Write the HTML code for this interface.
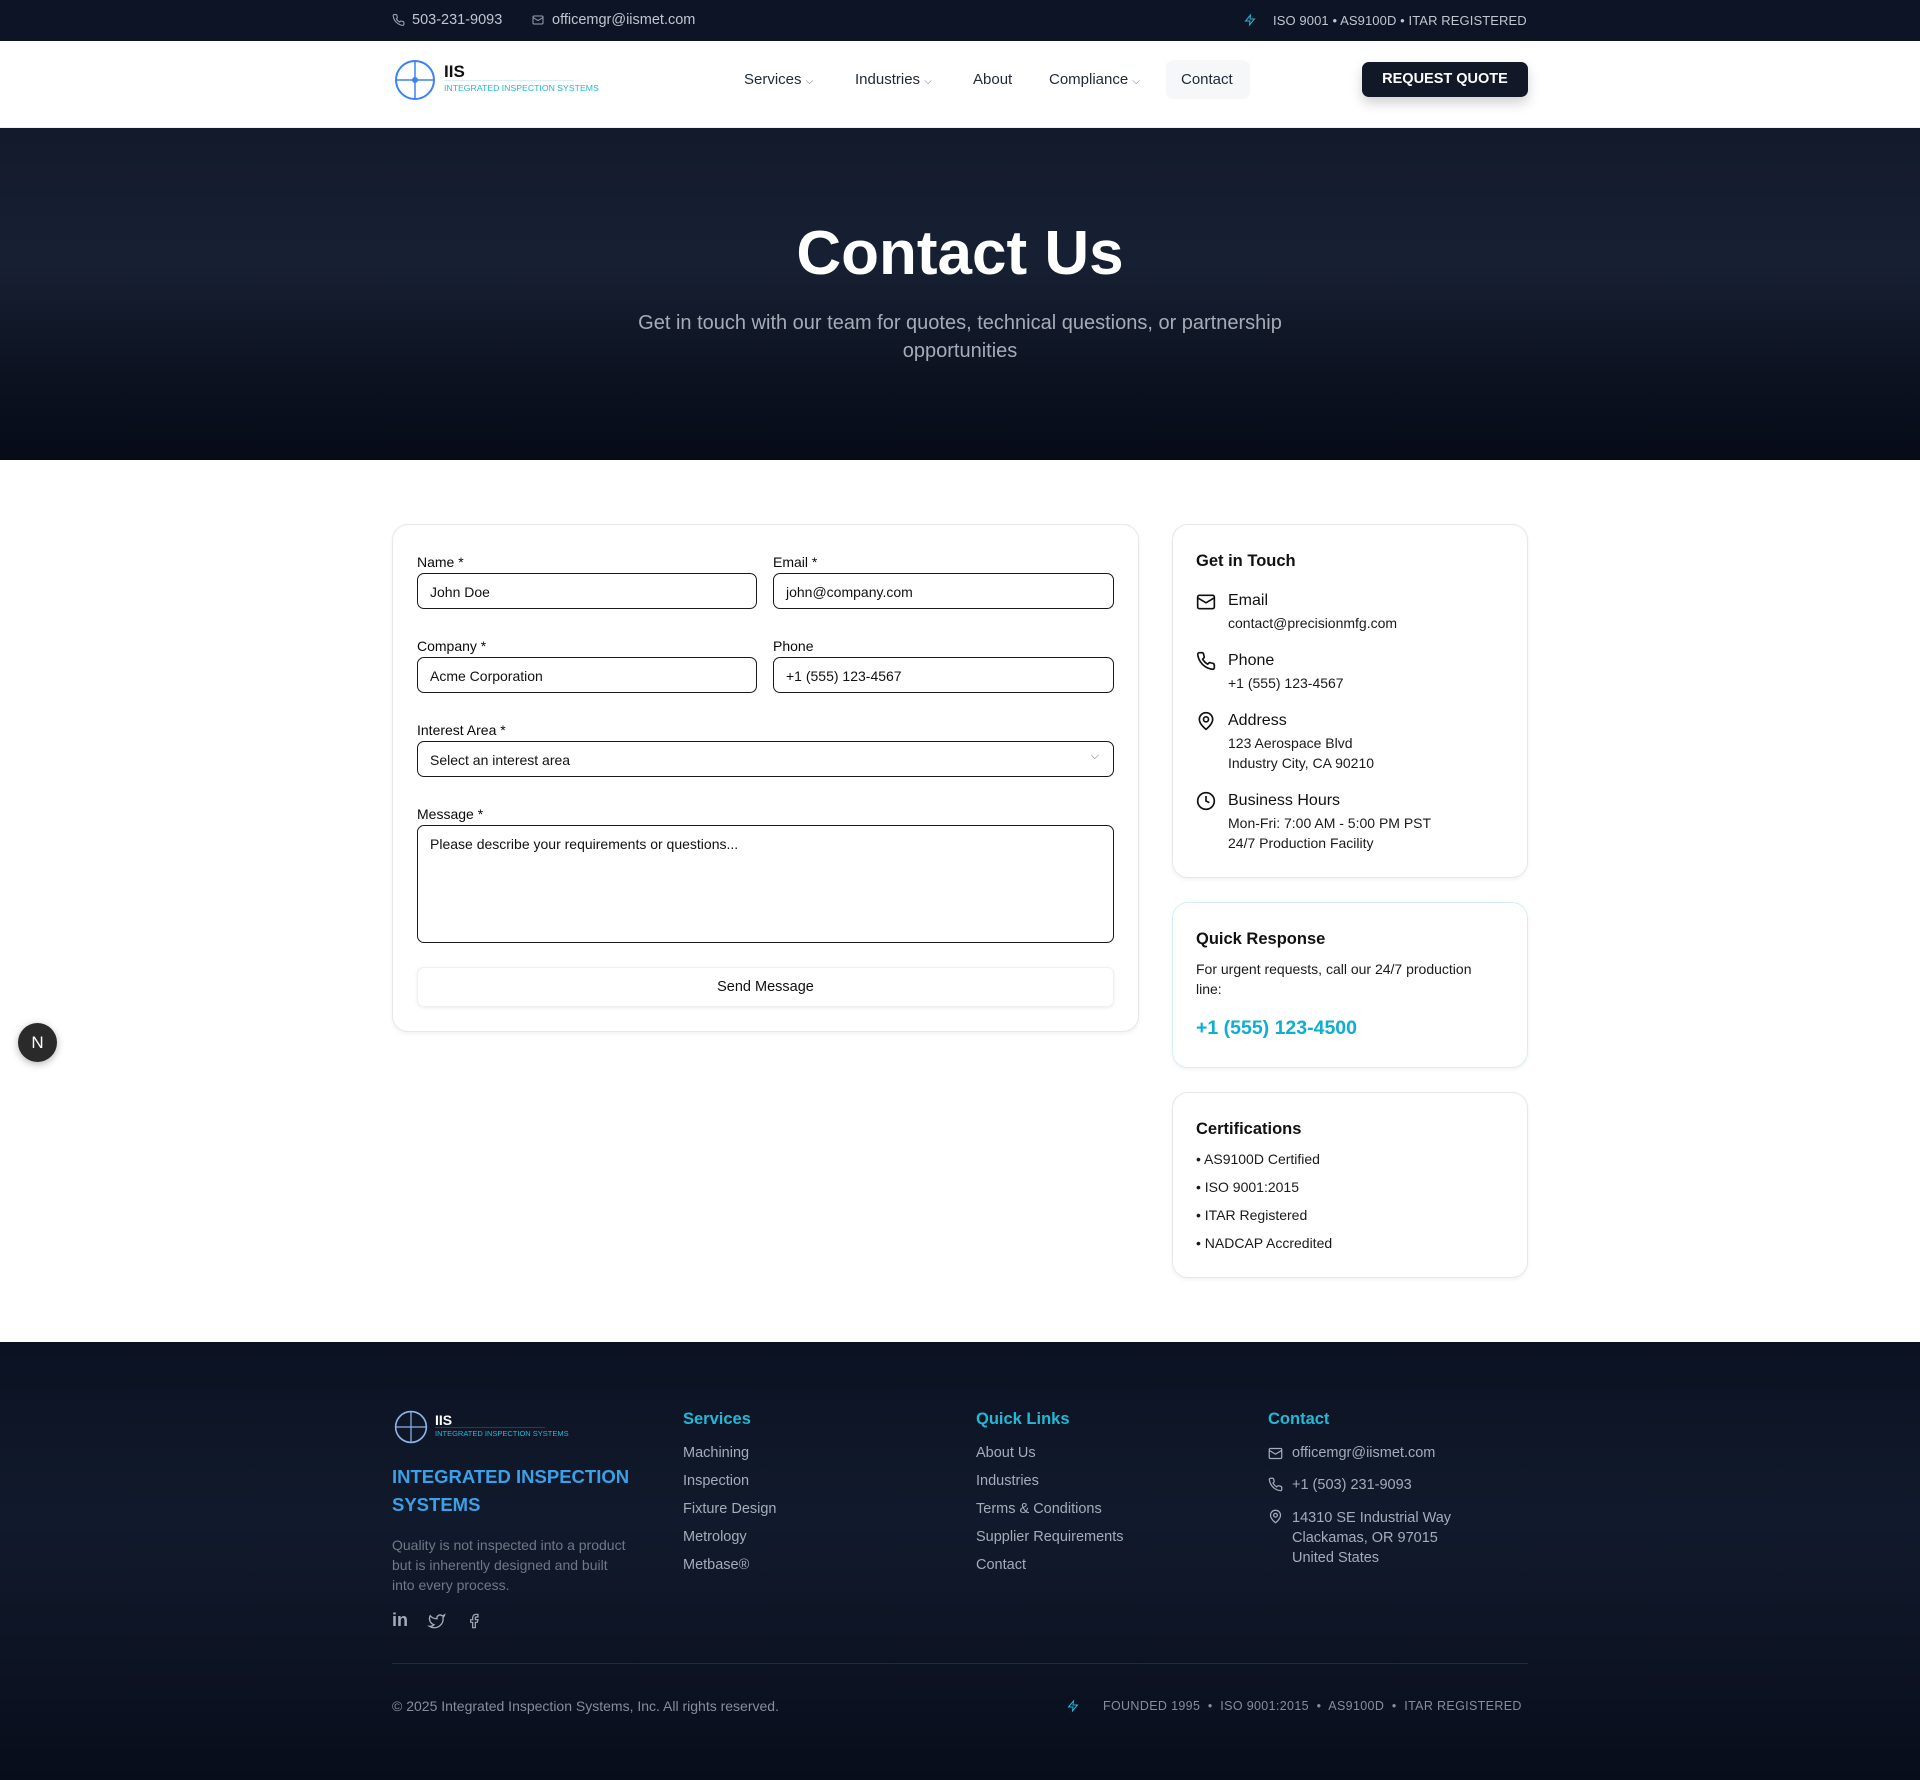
<!DOCTYPE html>
<html><head><meta charset="utf-8"><style>
*{box-sizing:border-box;margin:0;padding:0}
body{width:1920px;height:1780px;position:relative;font-family:"Liberation Sans",Arial,sans-serif;background:#fff;color:#0a0a0a;overflow:hidden}
.a{position:absolute;white-space:nowrap}
.top{left:0;top:0;width:1920px;height:41px;background:#0d1426}
.nav{left:0;top:41px;width:1920px;height:87px;background:#fff;border-bottom:1px solid #eceef1}
.nl{font-size:15px;color:#1f2937;top:71px}
.hero{left:0;top:128px;width:1920px;height:332px;background:linear-gradient(180deg,#121a2b 0%,#172033 40%,#0c1220 75%,#070b18 100%)}
.card{border:1.5px solid #e5e7eb;border-radius:16px;background:#fff;box-shadow:0 2px 4px rgba(0,0,0,.05)}
.lbl{font-size:14px;color:#0a0a0a}
.inp{border:1.5px solid #1a1a1a;border-radius:7px;height:36px;font-size:14px;padding:10px 12px;color:#111}
.ct{font-size:16.5px;font-weight:bold;color:#111}
.cs{font-size:16px;color:#111}
.cx{font-size:14px;color:#1a1a1a}
.foot{left:0;top:1342px;width:1920px;height:438px;background:linear-gradient(180deg,#0b1222 0%,#111a2c 40%,#0d1424 70%,#080d1b 100%)}
.fh{font-size:16.5px;color:#22b8d6;font-weight:bold}
.fl{font-size:14.5px;color:#a4acb9}
</style></head><body>
<div class="a top"></div>
<svg class="a" style="left:392px;top:13px" width="13" height="14" viewBox="0 0 24 24" fill="none" stroke="#9aa3b2" stroke-width="2"><path d="M22 16.9v3a2 2 0 0 1-2.2 2 19.8 19.8 0 0 1-8.6-3.1 19.5 19.5 0 0 1-6-6A19.8 19.8 0 0 1 2.1 4.2 2 2 0 0 1 4.1 2h3a2 2 0 0 1 2 1.7c.1.9.4 1.8.7 2.7a2 2 0 0 1-.5 2.1L8 9.8a16 16 0 0 0 6 6l1.3-1.3a2 2 0 0 1 2.1-.4c.9.3 1.8.6 2.7.7a2 2 0 0 1 1.7 2z"/></svg>
<span class="a" style="left:412px;top:12px;color:#c0c6d0;font-size:14.5px">503-231-9093</span>
<svg class="a" style="left:532px;top:14px" width="12" height="12" viewBox="0 0 24 24" fill="none" stroke="#9aa3b2" stroke-width="2"><rect x="2" y="4" width="20" height="16" rx="2"/><path d="m22 7-10 6L2 7"/></svg>
<span class="a" style="left:552px;top:12px;color:#c0c6d0;font-size:14.5px">officemgr@iismet.com</span>
<svg class="a" style="left:1244px;top:13px" width="12" height="14" viewBox="0 0 24 24" fill="none" stroke="#22b8d6" stroke-width="2"><path d="M13 2 3 14h9l-1 8 10-12h-9z"/></svg>
<span class="a" style="left:1273px;top:13px;color:#c0c6d0;font-size:13px;letter-spacing:.1px">ISO 9001 • AS9100D • ITAR REGISTERED</span>

<div class="a nav"></div>
<svg class="a" style="left:394px;top:59px" width="42" height="42" viewBox="0 0 42 42" fill="none" stroke="#3b82f6" stroke-width="2"><circle cx="21" cy="21" r="19"/><path d="M21 2v38M2 21h38" stroke-width="1.5"/><circle cx="21" cy="21" r="2" fill="#3b82f6"/></svg>
<span class="a" style="left:444px;top:62px;font-size:17px;font-weight:bold;color:#111">IIS</span>
<div class="a" style="left:444px;top:80px;width:130px;height:1px;background:#d8eef8"></div>
<span class="a" style="left:444px;top:83px;font-size:8.7px;color:#22b8d6">INTEGRATED INSPECTION SYSTEMS</span>
<span class="a nl" style="left:744px">Services <span style="font-size:10px;color:#777">⌵</span></span>
<span class="a nl" style="left:855px">Industries <span style="font-size:10px;color:#777">⌵</span></span>
<span class="a nl" style="left:973px">About</span>
<span class="a nl" style="left:1049px">Compliance <span style="font-size:10px;color:#777">⌵</span></span>
<div class="a" style="left:1166px;top:60px;width:84px;height:39px;background:#f6f7f9;border-radius:7px"></div>
<span class="a nl" style="left:1181px">Contact</span>
<div class="a" style="left:1362px;top:62px;width:166px;height:35px;background:#111827;border-radius:7px;box-shadow:0 6px 12px rgba(0,0,0,.18);color:#fff;font-size:14.5px;font-weight:bold;text-align:center;line-height:35px">REQUEST QUOTE</div>

<div class="a hero"></div>
<div class="a" style="left:0;top:218px;width:1920px;text-align:center;color:#fff;font-size:62px;font-weight:bold">Contact Us</div>
<div class="a" style="left:0;top:309px;width:1920px;text-align:center;color:#a5acb8;font-size:20px;line-height:28px;white-space:normal">Get in touch with our team for quotes, technical questions, or partnership<br>opportunities</div>

<div class="a card" style="left:392px;top:524px;width:747px;height:508px"></div>
<span class="a lbl" style="left:417px;top:554px">Name *</span>
<div class="a inp" style="left:417px;top:573px;width:340px">John Doe</div>
<span class="a lbl" style="left:773px;top:554px">Email *</span>
<div class="a inp" style="left:773px;top:573px;width:341px">john@company.com</div>
<span class="a lbl" style="left:417px;top:638px">Company *</span>
<div class="a inp" style="left:417px;top:657px;width:340px">Acme Corporation</div>
<span class="a lbl" style="left:773px;top:638px">Phone</span>
<div class="a inp" style="left:773px;top:657px;width:341px">+1 (555) 123-4567</div>
<span class="a lbl" style="left:417px;top:722px">Interest Area *</span>
<div class="a inp" style="left:417px;top:741px;width:697px">Select an interest area<span style="position:absolute;right:14px;top:8px;font-size:11px;color:#666">⌵</span></div>
<span class="a lbl" style="left:417px;top:806px">Message *</span>
<div class="a inp" style="left:417px;top:825px;width:697px;height:118px;padding-top:10px">Please describe your requirements or questions...</div>
<div class="a" style="left:417px;top:967px;width:697px;height:40px;border-radius:7px;box-shadow:0 1px 3px rgba(0,0,0,.08);border:1px solid #f0f0f0;text-align:center;line-height:38px;font-size:14.5px;color:#111">Send Message</div>

<div class="a card" style="left:1172px;top:524px;width:356px;height:354px"></div>
<span class="a ct" style="left:1196px;top:552px">Get in Touch</span>
<svg class="a" style="left:1196px;top:592px" width="20" height="20" viewBox="0 0 24 24" fill="none" stroke="#111" stroke-width="2"><rect x="2" y="4" width="20" height="16" rx="2"/><path d="m22 7-10 6L2 7"/></svg>
<span class="a cs" style="left:1228px;top:592px">Email</span>
<span class="a cx" style="left:1228px;top:615px">contact@precisionmfg.com</span>
<svg class="a" style="left:1196px;top:651px" width="20" height="20" viewBox="0 0 24 24" fill="none" stroke="#111" stroke-width="2"><path d="M22 16.9v3a2 2 0 0 1-2.2 2 19.8 19.8 0 0 1-8.6-3.1 19.5 19.5 0 0 1-6-6A19.8 19.8 0 0 1 2.1 4.2 2 2 0 0 1 4.1 2h3a2 2 0 0 1 2 1.7c.1.9.4 1.8.7 2.7a2 2 0 0 1-.5 2.1L8 9.8a16 16 0 0 0 6 6l1.3-1.3a2 2 0 0 1 2.1-.4c.9.3 1.8.6 2.7.7a2 2 0 0 1 1.7 2z"/></svg>
<span class="a cs" style="left:1228px;top:652px">Phone</span>
<span class="a cx" style="left:1228px;top:675px">+1 (555) 123-4567</span>
<svg class="a" style="left:1196px;top:711px" width="20" height="20" viewBox="0 0 24 24" fill="none" stroke="#111" stroke-width="2"><path d="M20 10c0 6-8 12-8 12s-8-6-8-12a8 8 0 0 1 16 0z"/><circle cx="12" cy="10" r="3"/></svg>
<span class="a cs" style="left:1228px;top:712px">Address</span>
<span class="a cx" style="left:1228px;top:735px">123 Aerospace Blvd</span>
<span class="a cx" style="left:1228px;top:755px">Industry City, CA 90210</span>
<svg class="a" style="left:1196px;top:791px" width="20" height="20" viewBox="0 0 24 24" fill="none" stroke="#111" stroke-width="2"><circle cx="12" cy="12" r="10"/><path d="M12 6v6l4 2"/></svg>
<span class="a cs" style="left:1228px;top:792px">Business Hours</span>
<span class="a cx" style="left:1228px;top:815px">Mon-Fri: 7:00 AM - 5:00 PM PST</span>
<span class="a cx" style="left:1228px;top:835px">24/7 Production Facility</span>

<div class="a card" style="left:1172px;top:902px;width:356px;height:166px;border-color:#d6eef5"></div>
<span class="a ct" style="left:1196px;top:930px">Quick Response</span>
<span class="a cx" style="left:1196px;top:961px">For urgent requests, call our 24/7 production</span>
<span class="a cx" style="left:1196px;top:981px">line:</span>
<span class="a" style="left:1196px;top:1017px;font-size:19.5px;color:#0eaed0;font-weight:bold">+1 (555) 123-4500</span>

<div class="a card" style="left:1172px;top:1092px;width:356px;height:186px"></div>
<span class="a ct" style="left:1196px;top:1120px">Certifications</span>
<span class="a cx" style="left:1196px;top:1151px">• AS9100D Certified</span>
<span class="a cx" style="left:1196px;top:1179px">• ISO 9001:2015</span>
<span class="a cx" style="left:1196px;top:1207px">• ITAR Registered</span>
<span class="a cx" style="left:1196px;top:1235px">• NADCAP Accredited</span>

<div class="a" style="left:18px;top:1023px;width:39px;height:39px;border-radius:50%;background:#2a2a2a;box-shadow:0 2px 8px rgba(0,0,0,.3);color:#fff;text-align:center;line-height:39px;font-size:17px">N</div>

<div class="a foot"></div>
<svg class="a" style="left:394px;top:1410px" width="34" height="34" viewBox="0 0 42 42" fill="none" stroke="#8fb4ec" stroke-width="2"><circle cx="21" cy="21" r="19"/><path d="M21 2v38M2 21h38" stroke-width="1.5"/></svg>
<span class="a" style="left:435px;top:1412px;font-size:14px;font-weight:bold;color:#fff">IIS</span>
<div class="a" style="left:435px;top:1427px;width:110px;height:1px;background:#2a3a55"></div>
<span class="a" style="left:435px;top:1429px;font-size:7.5px;color:#22b8d6">INTEGRATED INSPECTION SYSTEMS</span>
<div class="a" style="left:392px;top:1463px;font-size:18.5px;line-height:28px;color:#3aa0e8;font-weight:bold;white-space:normal">INTEGRATED INSPECTION<br>SYSTEMS</div>
<div class="a" style="left:392px;top:1535px;font-size:14px;line-height:20px;color:#6f7888;white-space:normal">Quality is not inspected into a product<br>but is inherently designed and built<br>into every process.</div>
<span class="a" style="left:392px;top:1610px;font-size:18px;color:#a4acb9;font-weight:bold">in</span>
<svg class="a" style="left:427px;top:1612px" width="20" height="18" viewBox="0 0 24 24" fill="none" stroke="#a4acb9" stroke-width="1.8"><path d="M22 4s-.7 2.1-2 3.4c1.6 10-9.4 17.3-18 11.6 2.2.1 4.4-.6 6-2C3 15.5.5 9.6 3 5c2.2 2.6 5.6 4.1 9 4-.9-4.2 4-6.6 7-3.8 1.1 0 3-1.2 3-1.2z"/></svg>
<svg class="a" style="left:466px;top:1611px" width="16" height="20" viewBox="0 0 24 24" fill="none" stroke="#a4acb9" stroke-width="1.8"><path d="M18 2h-3a5 5 0 0 0-5 5v3H7v4h3v8h4v-8h3l1-4h-4V7a1 1 0 0 1 1-1h3z"/></svg>

<span class="a fh" style="left:683px;top:1410px">Services</span>
<span class="a fl" style="left:683px;top:1445px">Machining</span>
<span class="a fl" style="left:683px;top:1473px">Inspection</span>
<span class="a fl" style="left:683px;top:1501px">Fixture Design</span>
<span class="a fl" style="left:683px;top:1529px">Metrology</span>
<span class="a fl" style="left:683px;top:1557px">Metbase®</span>

<span class="a fh" style="left:976px;top:1410px">Quick Links</span>
<span class="a fl" style="left:976px;top:1445px">About Us</span>
<span class="a fl" style="left:976px;top:1473px">Industries</span>
<span class="a fl" style="left:976px;top:1501px">Terms &amp; Conditions</span>
<span class="a fl" style="left:976px;top:1529px">Supplier Requirements</span>
<span class="a fl" style="left:976px;top:1557px">Contact</span>

<span class="a fh" style="left:1268px;top:1410px">Contact</span>
<svg class="a" style="left:1268px;top:1446px" width="15" height="15" viewBox="0 0 24 24" fill="none" stroke="#a4acb9" stroke-width="2"><rect x="2" y="4" width="20" height="16" rx="2"/><path d="m22 7-10 6L2 7"/></svg>
<span class="a fl" style="left:1292px;top:1445px">officemgr@iismet.com</span>
<svg class="a" style="left:1268px;top:1477px" width="15" height="15" viewBox="0 0 24 24" fill="none" stroke="#a4acb9" stroke-width="2"><path d="M22 16.9v3a2 2 0 0 1-2.2 2 19.8 19.8 0 0 1-8.6-3.1 19.5 19.5 0 0 1-6-6A19.8 19.8 0 0 1 2.1 4.2 2 2 0 0 1 4.1 2h3a2 2 0 0 1 2 1.7c.1.9.4 1.8.7 2.7a2 2 0 0 1-.5 2.1L8 9.8a16 16 0 0 0 6 6l1.3-1.3a2 2 0 0 1 2.1-.4c.9.3 1.8.6 2.7.7a2 2 0 0 1 1.7 2z"/></svg>
<span class="a fl" style="left:1292px;top:1477px">+1 (503) 231-9093</span>
<svg class="a" style="left:1268px;top:1509px" width="15" height="15" viewBox="0 0 24 24" fill="none" stroke="#a4acb9" stroke-width="2"><path d="M20 10c0 6-8 12-8 12s-8-6-8-12a8 8 0 0 1 16 0z"/><circle cx="12" cy="10" r="3"/></svg>
<div class="a fl" style="left:1292px;top:1508px;line-height:20px;white-space:normal">14310 SE Industrial Way<br>Clackamas, OR 97015<br>United States</div>

<div class="a" style="left:392px;top:1663px;width:1136px;height:1px;background:#1c2a3a"></div>
<span class="a" style="left:392px;top:1698px;font-size:14px;color:#858d9a">© 2025 Integrated Inspection Systems, Inc. All rights reserved.</span>
<svg class="a" style="left:1067px;top:1699px" width="12" height="14" viewBox="0 0 24 24" fill="none" stroke="#22b8d6" stroke-width="2"><path d="M13 2 3 14h9l-1 8 10-12h-9z"/></svg>
<span class="a" style="left:1103px;top:1699px;font-size:12.5px;color:#858d9a;letter-spacing:.35px">FOUNDED 1995 &nbsp;•&nbsp; ISO 9001:2015 &nbsp;•&nbsp; AS9100D &nbsp;•&nbsp; ITAR REGISTERED</span>
</body></html>
